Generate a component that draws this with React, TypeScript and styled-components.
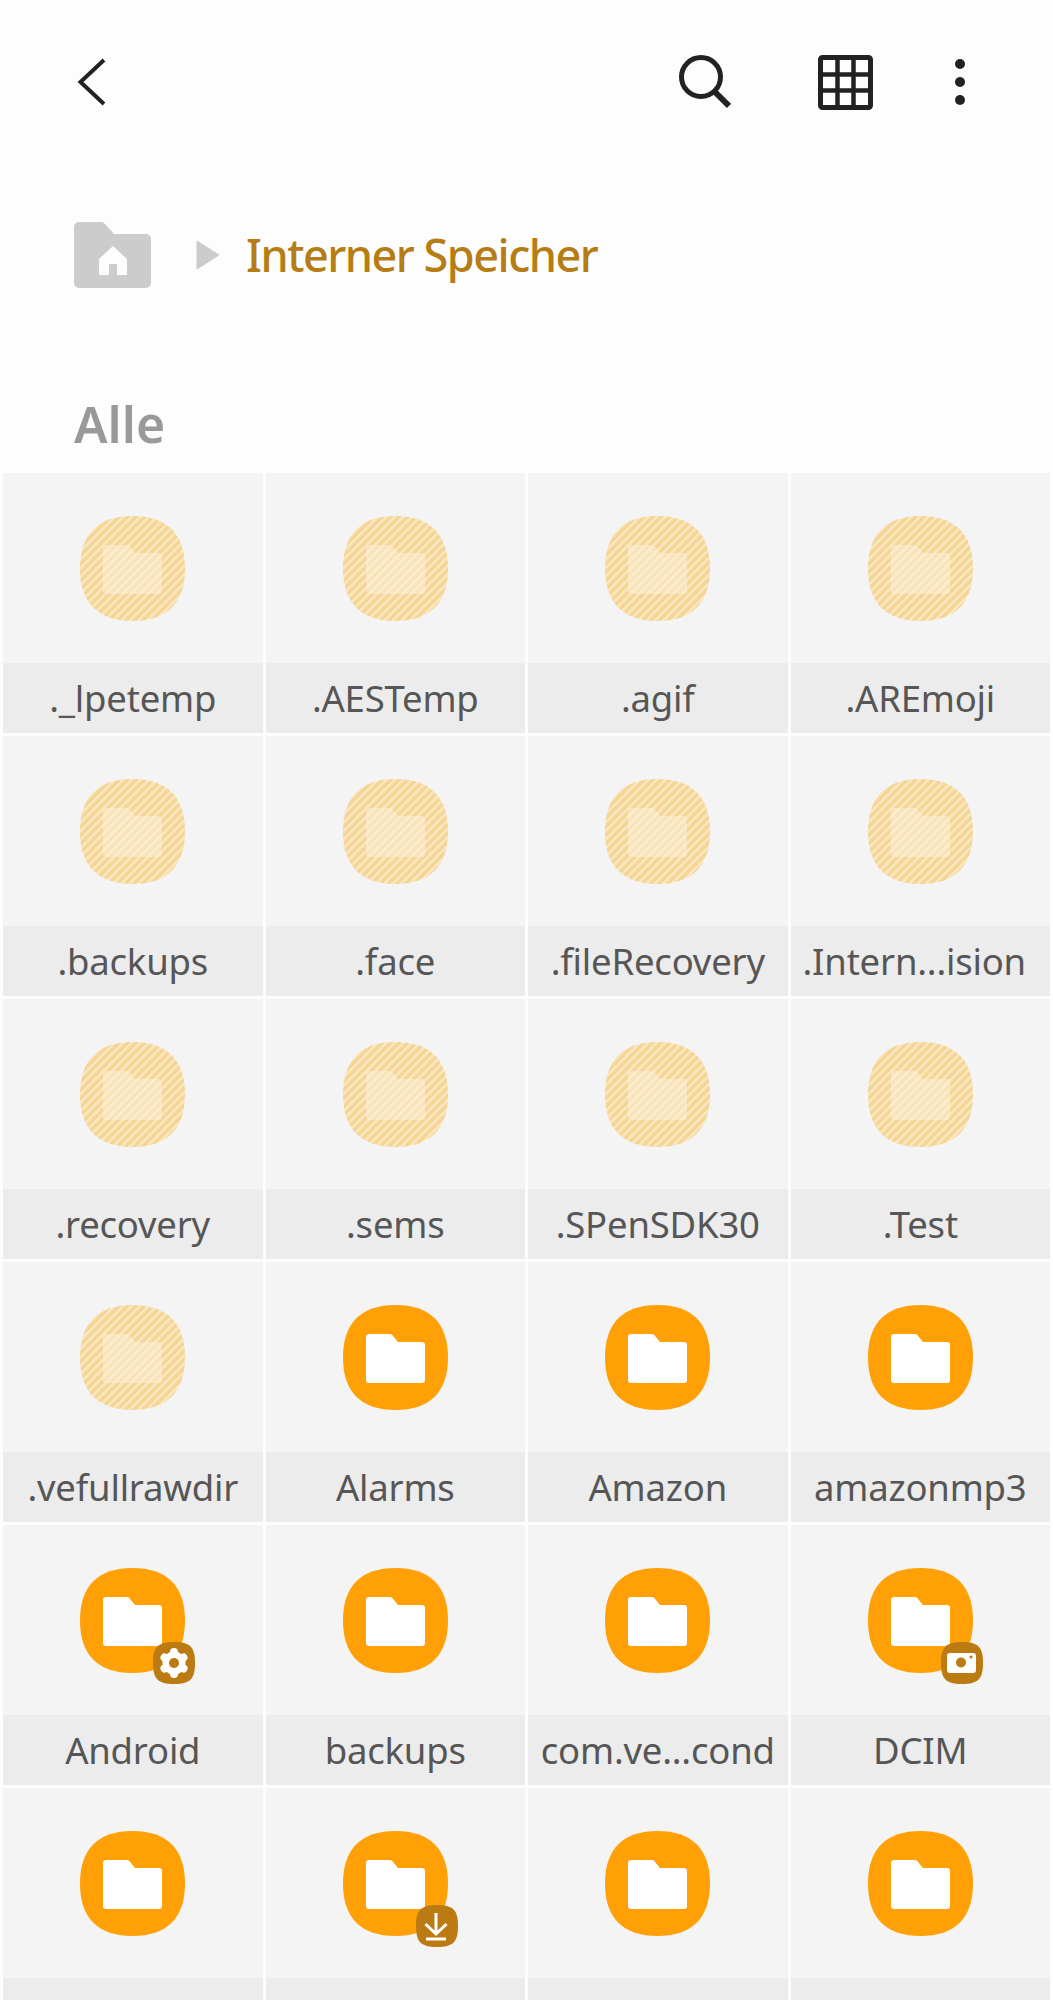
import React from 'react';
import styled, { createGlobalStyle } from 'styled-components';

const GlobalStyle = createGlobalStyle`
  html, body {
    margin: 0;
    padding: 0;
    background: #fdfdfd;
  }
`;

const Page = styled.div`
  width: 1053px;
  height: 2000px;
  overflow: hidden;
  background: #fdfdfd;
  font-family: 'Noto Sans', 'Open Sans', sans-serif;
`;

const Toolbar = styled.div`
  display: flex;
  align-items: center;
  height: 164px;
  padding: 0 88px 0 77px;
  box-sizing: border-box;
`;

const Spacer = styled.div`
  flex: 1;
`;

const ToolIcon = styled.svg<{ $gap?: number }>`
  display: block;
  margin-left: ${(p) => p.$gap || 0}px;
  color: #222;
`;

const Breadcrumb = styled.div`
  display: flex;
  align-items: center;
  height: 182px;
  padding-left: 74px;
`;

const PathArrow = styled.svg`
  margin-left: 45px;
`;

const PathText = styled.div`
  margin-left: 26px;
  padding-bottom: 2px;
  font-size: 45px;
  font-weight: 500;
  letter-spacing: -1.5px;
  color: #b57d14;
`;

const Heading = styled.div`
  height: 127px;
  padding: 45px 0 0 74px;
  box-sizing: border-box;
  font-size: 50px;
  line-height: 66px;
  font-weight: 600;
  color: #999999;
`;

const Grid = styled.div`
  display: grid;
  grid-template-columns: repeat(4, 1fr);
  gap: 3px;
  padding: 0 3px;
`;

const Tile = styled.div`
  display: flex;
  flex-direction: column;
  height: 260px;
`;

const Thumb = styled.div`
  display: flex;
  justify-content: center;
  height: 190px;
  padding-top: 43px;
  box-sizing: border-box;
  background: #f4f4f4;
`;

const IconWrap = styled.div`
  position: relative;
  width: 105px;
  height: 105px;
`;

const Badge = styled.svg`
  position: absolute;
  right: -10px;
  bottom: -11px;
  width: 42px;
  height: 42px;
`;

const Label = styled.div<{ $cut?: boolean }>`
  height: 70px;
  line-height: 71px;
  padding-right: ${(p) => (p.$cut ? 12 : 0)}px;
  text-align: center;
  white-space: nowrap;
  overflow: hidden;
  background: #ececec;
  font-size: 36.5px;
  letter-spacing: -0.2px;
  color: #565656;
`;

const SQUIRCLE =
  'M52.5 0C18 0 0 18 0 52.5S18 105 52.5 105 105 87 105 52.5 87 0 52.5 0Z';
const FOLDER =
  'M23 32a3 3 0 0 1 3-3h21a3 3 0 0 1 2.3 1l5.7 7h24a3 3 0 0 1 3 3v35a3 3 0 0 1-3 3H26a3 3 0 0 1-3-3V32Z';

type BadgeKind = 'gear' | 'camera' | 'download';

function FolderBadge({ kind }: { kind: BadgeKind }) {
  return (
    <Badge viewBox="0 0 42 42">
      <path d="M21 0C5 0 0 5 0 21s5 21 21 21 21-5 21-21S37 0 21 0Z" fill="#bb7a12" />
      {kind === 'gear' && (
        <>
          <circle cx="21" cy="21" r="8" fill="none" stroke="#fff" strokeWidth="7" />
          {[0, 60, 120, 180, 240, 300].map((a) => (
            <path
              key={a}
              d="M21 10V10"
              stroke="#fff"
              strokeWidth="8"
              strokeLinecap="round"
              transform={`rotate(${a} 21 21)`}
            />
          ))}
          <circle cx="21" cy="21" r="5" fill="#bb7a12" />
        </>
      )}
      {kind === 'camera' && (
        <>
          <rect x="6" y="11" width="29" height="20" rx="3" fill="#fff" />
          <circle cx="20" cy="20.5" r="5" fill="#bb7a12" />
          <circle cx="30" cy="15" r="1.6" fill="#bb7a12" />
        </>
      )}
      {kind === 'download' && (
        <path
          d="M20 8v20M9.5 19 20 29l10.500-10M10 34h20"
          fill="none"
          stroke="#fff"
          strokeWidth="3"
        />
      )}
    </Badge>
  );
}

function FolderIcon({ hidden, badge, id }: { hidden?: boolean; badge?: BadgeKind; id: string }) {
  return (
    <IconWrap>
      <svg width="105" height="105" viewBox="0 0 105 105">
        {hidden ? (
          <>
            <defs>
              <pattern
                id={id}
                width="6"
                height="6"
                patternUnits="userSpaceOnUse"
                patternTransform="rotate(45)"
              >
                <rect width="6" height="6" fill="#f5d594" />
                <rect width="2.4" height="6" fill="#fae8c4" />
              </pattern>
            </defs>
            <path d={SQUIRCLE} fill={`url(#${id})`} />
            <path d={FOLDER} fill="#fdf3e0" fillOpacity="0.5" />
          </>
        ) : (
          <>
            <path d={SQUIRCLE} fill="#ffa007" />
            <path d={FOLDER} fill="#ffffff" />
          </>
        )}
      </svg>
      {badge && <FolderBadge kind={badge} />}
    </IconWrap>
  );
}

type Item = { name: string; hidden?: boolean; badge?: BadgeKind; cut?: boolean };

const items: Item[] = [
  { name: '._lpetemp', hidden: true },
  { name: '.AESTemp', hidden: true },
  { name: '.agif', hidden: true },
  { name: '.AREmoji', hidden: true },
  { name: '.backups', hidden: true },
  { name: '.face', hidden: true },
  { name: '.fileRecovery', hidden: true },
  { name: '.Intern...ision', hidden: true, cut: true },
  { name: '.recovery', hidden: true },
  { name: '.sems', hidden: true },
  { name: '.SPenSDK30', hidden: true },
  { name: '.Test', hidden: true },
  { name: '.vefullrawdir', hidden: true },
  { name: 'Alarms' },
  { name: 'Amazon' },
  { name: 'amazonmp3' },
  { name: 'Android', badge: 'gear' },
  { name: 'backups' },
  { name: 'com.ve...cond' },
  { name: 'DCIM', badge: 'camera' },
  { name: '' },
  { name: '', badge: 'download' },
  { name: '' },
  { name: '' },
];

export default function App() {
  return (
    <Page>
      <GlobalStyle />
      <Toolbar>
        <svg width="30" height="48" viewBox="0 0 30 48">
          <path d="M27 2 3.500 24 27 46" fill="none" stroke="#222" strokeWidth="4" />
        </svg>
        <Spacer />
        <ToolIcon width="52" height="54" viewBox="0 0 52 54">
          <circle cx="22" cy="22" r="19.500" fill="none" stroke="currentColor" strokeWidth="5" />
          <path d="m35 36 15 15" stroke="currentColor" strokeWidth="6" fill="none" />
        </ToolIcon>
        <ToolIcon $gap={87} width="55" height="55" viewBox="0 0 55 55">
          <rect x="2.500" y="2.500" width="50" height="50" rx="2" fill="none" stroke="currentColor" strokeWidth="5" />
          <path d="M19.500 2v51M35.500 2v51M2 19.500h51M2 35.500h51" stroke="currentColor" strokeWidth="4.500" />
        </ToolIcon>
        <ToolIcon $gap={82} width="10" height="46" viewBox="0 0 10 46">
          <circle cx="5" cy="5" r="5" fill="currentColor" />
          <circle cx="5" cy="23" r="5" fill="currentColor" />
          <circle cx="5" cy="41" r="5" fill="currentColor" />
        </ToolIcon>
      </Toolbar>
      <Breadcrumb>
        <svg width="77" height="66" viewBox="0 0 77 66">
          <path
            d="M0 5a5 5 0 0 1 5-5h22a5 5 0 0 1 4 2l9 10h32a5 5 0 0 1 5 5v44a5 5 0 0 1-5 5H5a5 5 0 0 1-5-5V5Z"
            fill="#cccccc"
          />
          <path d="M39 24 25 37v16h10V42h8v11h10V37L39 24Z" fill="#fdfdfd" />
        </svg>
        <PathArrow width="24" height="30" viewBox="0 0 24 30">
          <path d="M1 1v28l22-14L1 1Z" fill="#cccccc" stroke="#cccccc" strokeLinejoin="round" />
        </PathArrow>
        <PathText>Interner Speicher</PathText>
      </Breadcrumb>
      <Heading>Alle</Heading>
      <Grid>
        {items.map((item, i) => (
          <Tile key={i}>
            <Thumb>
              <FolderIcon hidden={item.hidden} badge={item.badge} id={`stripes-${i}`} />
            </Thumb>
            <Label $cut={item.cut}>{item.name}</Label>
          </Tile>
        ))}
      </Grid>
    </Page>
  );
}
